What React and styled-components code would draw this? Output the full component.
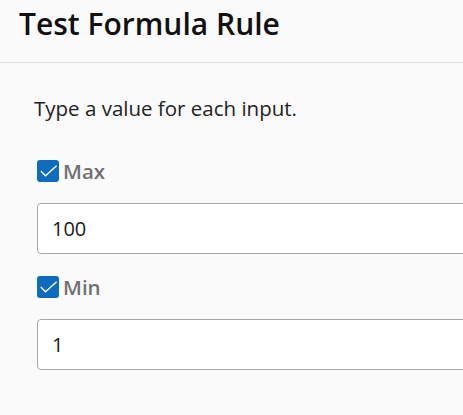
import React from "react";
import styled, { createGlobalStyle } from "styled-components";

const Global = createGlobalStyle`
  html, body { margin: 0; padding: 0; background: #fafafa; }
  body { font-family: "Open Sans", "Noto Sans", sans-serif; color: #1f1f1f; }
  * { box-sizing: border-box; }
`;

const Page = styled.div`
  width: 463px;
  height: 415px;
  overflow: hidden;
  background: #fafafa;
`;

const Header = styled.div`
  height: 63px;
  border-bottom: 1px solid #e1e1e1;
  padding: 4px 0 0 19px;
  display: flex;
  align-items: flex-start;
`;

const Title = styled.h1`
  margin: 0;
  font-size: 30px;
  font-weight: 600;
  color: #111;
  line-height: 40px;
  letter-spacing: 0;
`;

const Body = styled.div`
  padding: 30px 0 0 34px;
  display: flex;
  flex-direction: column;
`;

const Description = styled.p`
  margin: 0 0 33px;
  font-size: 20.5px;
  line-height: 30px;
  color: #222;
`;

const Field = styled.div`
  display: flex;
  flex-direction: column;
  padding-left: 3px;
  margin-bottom: ${(p) => p.$gap || 0}px;
`;

const CheckRow = styled.label`
  display: flex;
  align-items: center;
  gap: 4px;
  height: 30px;
  margin-bottom: 17px;
`;

const Box = styled.span`
  width: 22px;
  height: 22px;
  border-radius: 3px;
  background: #0f6cbd;
  display: flex;
  align-items: center;
  justify-content: center;
`;

const Label = styled.span`
  font-size: 20.5px;
  font-weight: 600;
  color: #707070;
`;

const Input = styled.input`
  width: 460px;
  height: 51px;
  border: 1px solid #a8a8a8;
  border-radius: 4px;
  background: #fff;
  padding: 0 14px;
  font-family: "Open Sans", "Noto Sans", sans-serif;
  font-size: 20px;
  color: #1a1a1a;
  outline: none;
`;

function Checkbox() {
  return (
    <Box>
      <svg width="20" height="20" viewBox="0 0 20 20" fill="none">
        <path d="M2.8 10 L7.5 14.8 L18.6 4.8" stroke="#fff" strokeWidth="1.3" />
      </svg>
    </Box>
  );
}

function InputField({ label, value, gap }) {
  return (
    <Field $gap={gap}>
      <CheckRow>
        <Checkbox />
        <Label>{label}</Label>
      </CheckRow>
      <Input defaultValue={value} />
    </Field>
  );
}

export default function App() {
  return (
    <Page>
      <Global />
      <Header>
        <Title>Test Formula Rule</Title>
      </Header>
      <Body>
        <Description>Type a value for each input.</Description>
        <InputField label="Max" value="100" gap={18} />
        <InputField label="Min" value="1" />
      </Body>
    </Page>
  );
}
